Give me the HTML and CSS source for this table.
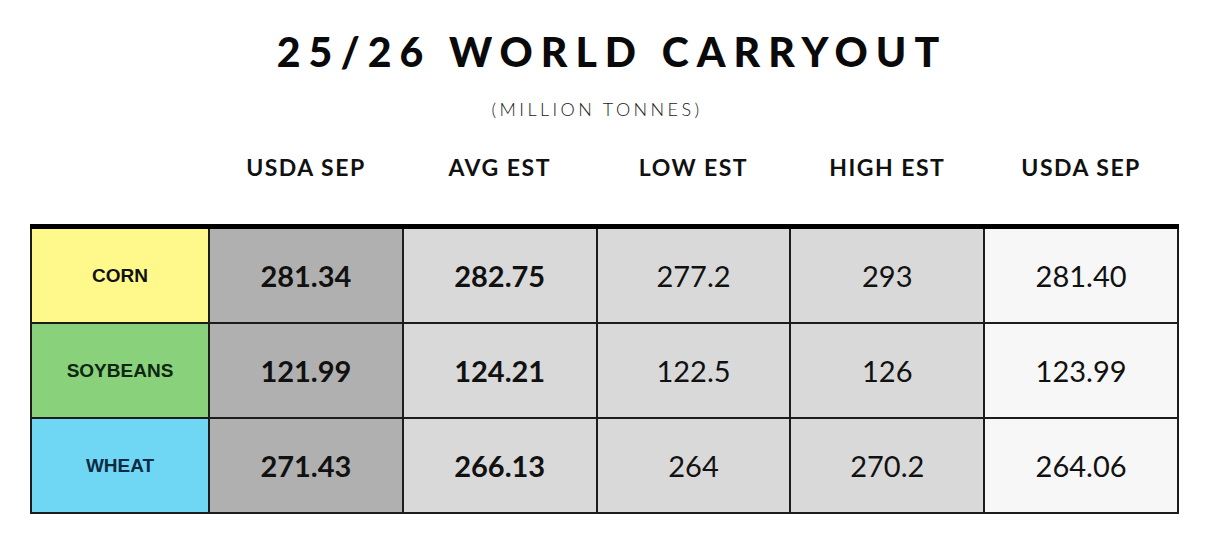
FILE: index.html
```html
<!DOCTYPE html>
<html lang="en">
<head>
<meta charset="utf-8">
<title>25/26 World Carryout</title>
<link rel="stylesheet" href="styles.css">
</head>
<body>
<main class="page">
  <h1 class="title">25/26 WORLD CARRYOUT</h1>
  <p class="subtitle">(MILLION TONNES)</p>
  <div class="col-heads">
    <span></span>
    <span>USDA SEP</span>
    <span>AVG EST</span>
    <span>LOW EST</span>
    <span>HIGH EST</span>
    <span>USDA SEP</span>
  </div>
  <table class="grid">
    <tbody>
      <tr>
        <td class="label corn">CORN</td>
        <td class="usda strong">281.34</td>
        <td class="est strong">282.75</td>
        <td class="est">277.2</td>
        <td class="est">293</td>
        <td class="prev">281.40</td>
      </tr>
      <tr>
        <td class="label soy">SOYBEANS</td>
        <td class="usda strong">121.99</td>
        <td class="est strong">124.21</td>
        <td class="est">122.5</td>
        <td class="est">126</td>
        <td class="prev">123.99</td>
      </tr>
      <tr>
        <td class="label wheat">WHEAT</td>
        <td class="usda strong">271.43</td>
        <td class="est strong">266.13</td>
        <td class="est">264</td>
        <td class="est">270.2</td>
        <td class="prev">264.06</td>
      </tr>
    </tbody>
  </table>
</main>
</body>
</html>
```

FILE: styles.css
```css
html, body {
  margin: 0;
  padding: 0;
  background: #ffffff;
}

.page {
  width: 1148px;
  margin-left: 30px;
  font-family: Lato, "Open Sans", sans-serif;
  color: #111;
}

.title {
  margin: 27px 0 0 0;
  text-align: center;
  font-family: Lato, sans-serif;
  font-weight: 900;
  font-size: 41px;
  line-height: 1.2;
  letter-spacing: 8px;
  padding-left: 16px;
  color: #0a0a0a;
}

.subtitle {
  margin: 23px 0 0 0;
  padding-right: 14px;
  text-align: center;
  font-family: Lato, sans-serif;
  font-weight: 300;
  font-size: 18px;
  line-height: 1.2;
  letter-spacing: 3.4px;
  color: #1a1a1a;
}

.col-heads {
  display: grid;
  grid-template-columns: 179px repeat(5, 1fr);
  margin-top: 33px;
  font-family: Lato, sans-serif;
  font-weight: 700;
  font-size: 23px;
  letter-spacing: 1.5px;
  line-height: 1.2;
  text-align: center;
  color: #111;
}

.grid {
  margin-top: 43px;
  width: 1149px;
  border-collapse: collapse;
  table-layout: fixed;
  border-top: 5px solid #000;
}

.grid td {
  border: 2px solid #1c1c1c;
  height: 93px;
  padding: 0;
  text-align: center;
  vertical-align: middle;
  font-family: Lato, sans-serif;
  font-size: 29px;
  font-weight: 400;
  color: #111;
}

.grid td.label {
  width: 176px;
  font-family: "Liberation Sans", Arial, sans-serif;
  font-weight: 700;
  font-size: 19px;
}

.grid td.strong {
  font-weight: 700;
}

.corn { background: #fff98c; color: #141414; }
.soy { background: #8ad17c; color: #0f2612 !important; }
.wheat { background: #6fd7f3; color: #0c2a44 !important; }

.usda { background: #b0b0b0; }
.est { background: #d9d9d9; }
.prev { background: #f7f7f7; }
```
